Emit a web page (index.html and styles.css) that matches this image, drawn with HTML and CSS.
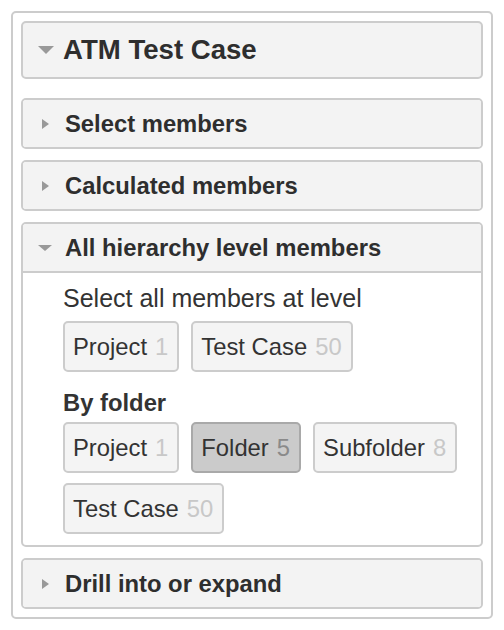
FILE: index.html
```html
<!DOCTYPE html>
<html>
<head>
<meta charset="utf-8">
<link rel="stylesheet" href="styles.css">
</head>
<body>
<div class="accordion">
  <div class="title-panel">
    <span class="caret-down caret-big"></span>
    <h1 class="title">ATM Test Case</h1>
  </div>
  <div class="panel">
    <div class="panel-head"><span class="caret-right"></span><span class="head-text">Select members</span></div>
  </div>
  <div class="panel">
    <div class="panel-head"><span class="caret-right"></span><span class="head-text">Calculated members</span></div>
  </div>
  <div class="panel panel-open">
    <div class="panel-head head-open"><span class="caret-down caret-small"></span><span class="head-text">All hierarchy level members</span></div>
    <div class="panel-body">
      <div class="label label-first">Select all members at level</div>
      <div class="chips">
        <span class="chip">Project<span class="count">1</span></span>
        <span class="chip">Test Case<span class="count">50</span></span>
      </div>
      <div class="label label-bold">By folder</div>
      <div class="chips">
        <span class="chip">Project<span class="count">1</span></span>
        <span class="chip chip-active">Folder<span class="count">5</span></span>
        <span class="chip">Subfolder<span class="count">8</span></span>
        <span class="chip">Test Case<span class="count">50</span></span>
      </div>
    </div>
  </div>
  <div class="panel">
    <div class="panel-head"><span class="caret-right"></span><span class="head-text">Drill into or expand</span></div>
  </div>
</div>
</body>
</html>
```

FILE: styles.css
```css
html, body {
  margin: 0;
  padding: 0;
  background: #ffffff;
}

body {
  font-family: "Liberation Sans", Arial, Helvetica, sans-serif;
  color: #333333;
}

.accordion {
  box-sizing: border-box;
  width: 482px;
  margin: 11px;
  border: 2px solid #cccccc;
  border-radius: 5px;
  padding: 8px;
  display: flex;
  flex-direction: column;
  gap: 11px;
}

.title-panel {
  box-sizing: border-box;
  height: 58px;
  margin-bottom: 8px;
  background: #f3f3f3;
  border: 2px solid #cccccc;
  border-radius: 5px;
  display: flex;
  align-items: center;
  padding-left: 15px;
}

.title {
  margin: 0 0 0 9px;
  font-size: 27.6px;
  font-weight: bold;
  line-height: 30px;
  color: #2e2e2e;
}

.caret-down {
  width: 0;
  height: 0;
  border-style: solid;
  border-color: #999999 transparent transparent transparent;
}

.caret-big {
  border-width: 8px 8px 0 8px;
}

.caret-small {
  border-width: 6px 7px 0 7px;
  margin-right: 13px;
}

.caret-right {
  width: 0;
  height: 0;
  border-style: solid;
  border-width: 5px 0 5px 7px;
  border-color: transparent transparent transparent #999999;
  margin-left: 4px;
  margin-right: 16px;
}

.panel {
  box-sizing: border-box;
  border: 2px solid #cccccc;
  border-radius: 5px;
  background: #ffffff;
  overflow: hidden;
}

.panel-head {
  height: 47px;
  background: #f3f3f3;
  display: flex;
  align-items: center;
  padding-left: 15px;
}

.head-open {
  border-bottom: 2px solid #cccccc;
}

.head-text {
  font-size: 23.8px;
  font-weight: bold;
  line-height: 28px;
  color: #2e2e2e;
}

.panel-body {
  padding: 11px 12px 11px 40px;
}

.label {
  font-size: 25px;
  line-height: 28px;
  margin-bottom: 9px;
}

.label-bold {
  font-size: 23.8px;
  font-weight: bold;
  margin-top: 17px;
  margin-bottom: 5px;
}

.chips {
  display: flex;
  flex-wrap: wrap;
  gap: 10px 12px;
}

.chip {
  box-sizing: border-box;
  height: 51px;
  display: inline-flex;
  align-items: center;
  padding: 0 9px 0 8px;
  background: #f4f4f4;
  border: 2px solid #cccccc;
  border-radius: 5px;
  font-size: 23.8px;
  line-height: 28px;
  color: #333333;
}

.count {
  margin-left: 8px;
  color: #c8c8c8;
}

.chip-active {
  background: #cbcbcb;
  border-color: #a9a9a9;
}

.chip-active .count {
  color: #8a8a8a;
}
```
